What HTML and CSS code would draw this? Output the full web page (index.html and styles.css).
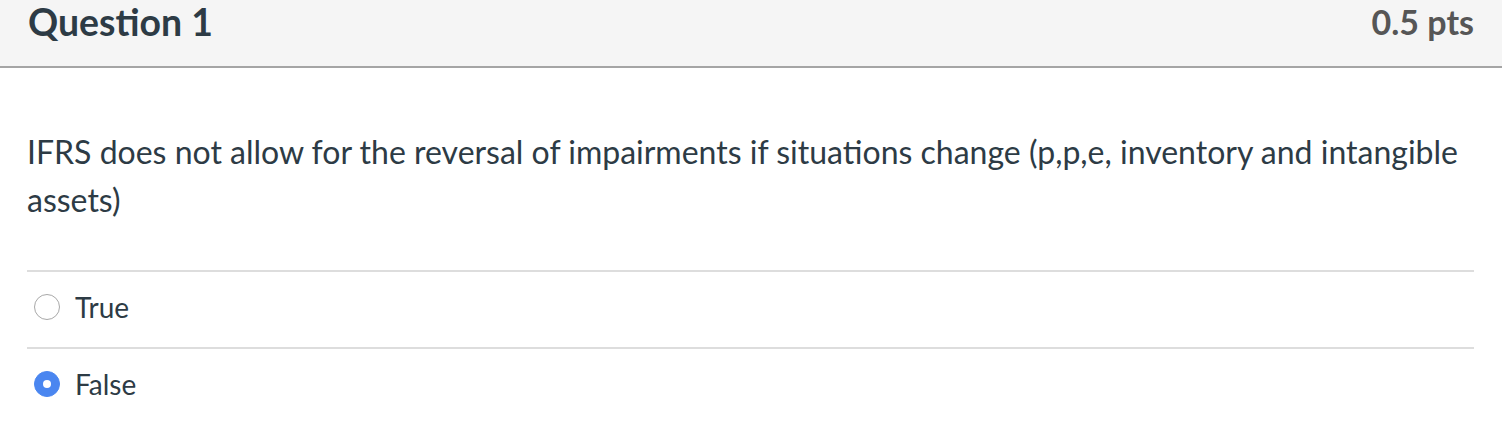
FILE: index.html
```html
<!DOCTYPE html>
<html>
<head>
<meta charset="utf-8">
<link rel="stylesheet" href="styles.css">
</head>
<body>
<div class="question">
  <div class="header">
    <span class="title">Question 1</span>
    <span class="points">0.5 pts</span>
  </div>
  <div class="content">
    <p class="text">IFRS does not allow for the reversal of impairments if situations change (p,p,e, inventory and intangible assets)</p>
    <div class="answers">
      <label class="answer">
        <span class="radio"></span>
        <span class="label">True</span>
      </label>
      <label class="answer">
        <span class="radio checked"></span>
        <span class="label">False</span>
      </label>
    </div>
  </div>
</div>
</body>
</html>
```
FILE: styles.css
```css
html, body {
  margin: 0;
  padding: 0;
  background: #fff;
}
body {
  font-family: Lato, "Open Sans", sans-serif;
  color: #2d3b45;
}
.header {
  height: 66px;
  background: #f5f5f5;
  border-bottom: 2px solid #a5a5a5;
  display: flex;
  justify-content: space-between;
  align-items: flex-start;
  padding: 0 28px;
  box-sizing: content-box;
}
.title {
  font-size: 37.4px;
  font-weight: 700;
  line-height: 44px;
  color: #2d3b45;
}
.points {
  font-size: 34px;
  font-weight: 700;
  line-height: 44px;
  color: #565656;
}
.content {
  padding: 0 28px 0 27px;
}
.text {
  margin: 0;
  padding-top: 60px;
  font-size: 32px;
  line-height: 48px;
  padding-bottom: 46px;
  border-bottom: 2px solid #dddddd;
}
.answer {
  display: flex;
  align-items: center;
  height: 75px;
  box-sizing: content-box;
  border-bottom: 2px solid #dddddd;
  gap: 15px;
  padding-left: 7px;
}
.answer .radio,
.answer .label {
  margin-bottom: 5px;
}
.answer:last-child {
  border-bottom: none;
}
.radio {
  width: 24px;
  height: 24px;
  border-radius: 50%;
  border: 1.5px solid #a8a8a8;
  background: #fff;
  box-sizing: content-box;
  position: relative;
}
.radio.checked {
  border-color: #4a86f0;
  background: #4a86f0;
}
.radio.checked::after {
  content: "";
  position: absolute;
  left: 8px;
  top: 8px;
  width: 8px;
  height: 8px;
  border-radius: 50%;
  background: #fff;
}
.label {
  font-size: 28px;
  line-height: 32px;
}
```
